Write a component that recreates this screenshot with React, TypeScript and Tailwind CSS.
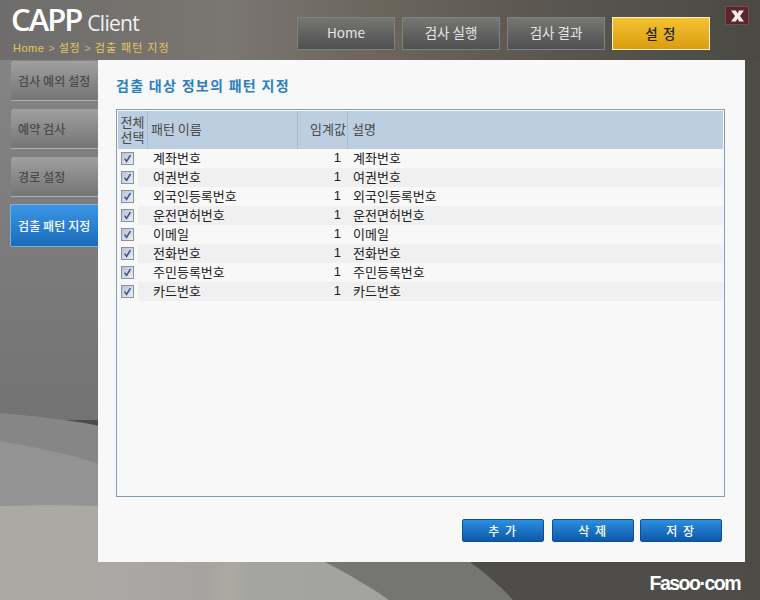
import React from "react";

const rows = ["계좌번호","여권번호","외국인등록번호","운전면허번호","이메일","전화번호","주민등록번호","카드번호"];
const nav = ["Home","검사 실행","검사 결과"];
const side = ["검사 예외 설정","예약 검사","경로 설정"];

function Check() {
  return (
    <svg width="13" height="13" viewBox="0 0 13 13" className="block">
      <defs>
        <linearGradient id="cb" x1="0" y1="0" x2="1" y2="1">
          <stop offset="0" stopColor="#b8bfce" />
          <stop offset="1" stopColor="#eef0f5" />
        </linearGradient>
      </defs>
      <rect x="0.5" y="0.5" width="12" height="12" fill="url(#cb)" stroke="#8d9198" />
      <path d="M3.6 6.6 L5.6 9.4 L9.4 3.2" fill="none" stroke="#3a5499" strokeWidth="1.6" />
    </svg>
  );
}

function Sep() {
  return <span className="mx-[4px] font-['Liberation_Sans',sans-serif] text-[#c9b87a]">&gt;</span>;
}

export default function App() {
  return (
    <div className="relative w-[760px] h-[600px] overflow-hidden font-['Noto_Sans_CJK_KR','Liberation_Sans',sans-serif] bg-[#4c4b46]">
      <svg className="absolute inset-0" width="760" height="600" viewBox="0 0 760 600">
        <defs>
          <linearGradient id="top" x1="0" y1="0" x2="1" y2="0">
            <stop offset="0" stopColor="#6e6d6c" />
            <stop offset="0.3" stopColor="#7a7670" />
            <stop offset="0.5" stopColor="#6b655c" />
            <stop offset="0.75" stopColor="#58554e" />
            <stop offset="1" stopColor="#4a4944" />
          </linearGradient>
          <linearGradient id="left" x1="0" y1="0" x2="0" y2="1">
            <stop offset="0" stopColor="#848484" />
            <stop offset="1" stopColor="#737373" />
          </linearGradient>
          <linearGradient id="bot" x1="0" y1="0" x2="1" y2="0">
            <stop offset="0" stopColor="#aaa9a6" />
            <stop offset="0.38" stopColor="#a5a4a1" />
            <stop offset="0.45" stopColor="#aca99f" />
            <stop offset="0.52" stopColor="#a4a4a2" />
            <stop offset="1" stopColor="#a2a2a0" />
          </linearGradient>
        </defs>
        <rect width="760" height="60" fill="url(#top)" />
        <rect y="60" width="100" height="360" fill="url(#left)" />
        <path d="M0 413 C35 416 70 420 100 426 L100 600 L0 600 Z" fill="#868686" />
        <path d="M0 441 C35 447 70 454 100 464 L100 600 L0 600 Z" fill="#939393" />
        <path d="M0 506 C30 505 70 505 100 506 L100 600 L0 600 Z" fill="#aaa9a3" />
        <path d="M470 562 L745 562 L745 600 L513 600 Z" fill="#4e4d4a" />
        <path d="M325 562 L470 562 C488 575 502 588 513 600 L389 600 Z" fill="#757573" />
        <path d="M98 562 L325 562 C350 575 372 588 389 600 L98 600 Z" fill="url(#bot)" />
      </svg>

      <div className="relative flex flex-col h-full">
        <header className="flex h-[60px]">
          <div className="w-[297px] pl-[11px] pt-[1px]">
            <div className="flex items-baseline h-[36px] font-['Open_Sans',sans-serif] text-white">
              <span className="text-[31px] leading-[36px] font-semibold tracking-[-2px]">CAPP</span>
              <span className="ml-[6px] text-[21px] leading-[36px] font-normal tracking-[-0.7px] text-[#f0f0f0]">Client</span>
            </div>
            <div className="mt-[2px] ml-[2px] text-[11px] leading-[16px] text-[#e6c65a] whitespace-nowrap">
              <span className="font-['Liberation_Sans',sans-serif] tracking-[0.5px]">Home</span>
              <Sep />
              <span className="tracking-[0.6px]">설정</span>
              <Sep />
              <span className="tracking-[1.2px]">검출 패턴 지정</span>
            </div>
          </div>
          <nav className="flex pt-[17px]">
            {nav.map((n) => (
              <div
                key={n}
                className="w-[98px] h-[33px] mr-[7px] pb-[2px] flex items-center justify-center text-[13.5px] text-[#e6e6e6] border border-[#818180] bg-gradient-to-b from-[#767675] to-[#505050]"
              >
                {n}
              </div>
            ))}
            <div className="w-[98px] h-[33px] flex items-center justify-center text-[13.5px] font-medium text-[#222] border border-[#fff3c4] bg-gradient-to-b from-[#f2c232] to-[#dc9c0c] tracking-[1.2px]">
              설 정
            </div>
          </nav>
          <div className="ml-[15px] mt-[6px] w-[24px] h-[19px] flex items-center justify-center bg-[#5c2528] border border-[#744a4a]">
            <svg width="15" height="12" viewBox="0 0 15 12">
              <path d="M1 0.5 H6 L7.5 3.5 L9 0.5 H14 L10 6 L14 11.5 H9 L7.5 8.5 L6 11.5 H1 L5 6 Z" fill="#eeeeee" />
            </svg>
          </div>
        </header>

        <div className="flex h-[502px]">
          <aside className="w-[98px] pl-[11px] pt-[1px] shrink-0">
            {side.map((s) => (
              <div
                key={s}
                className="h-[40px] mb-[8px] flex items-center pl-[7px] text-[12px] font-medium tracking-[0.1px] text-[#4a4a4a] whitespace-nowrap bg-gradient-to-b from-[#a0a0a0] to-[#757575] border-b border-b-[#b0b0b0] rounded-tl-[2px]"
              >
                {s}
              </div>
            ))}
            <div className="h-[43px] -mt-[1px] -ml-[1px] flex items-center pl-[7px] text-[12px] font-medium tracking-[0.1px] text-white whitespace-nowrap bg-gradient-to-b from-[#3a96e6] to-[#1a6cba] border border-r-0 border-[#7cb4e0] rounded-l-[2px]">
              검출 패턴 지정
            </div>
          </aside>

          <main className="w-[647px] bg-[#f8f8f8] pl-[18px]">
            <h1 className="h-[49px] pt-[15px] text-[14px] leading-[20px] font-bold text-[#2b80bd] tracking-[1.3px]">
              검출 대상 정보의 패턴 지정
            </h1>
            <div className="w-[609px] h-[388px] border border-[#7f9bb6] p-[1px]">
              <div className="flex h-[38px] bg-[#bdcee1] text-[13px] text-[#4a4a4a] leading-[15px]">
                <div className="w-[30px] pb-[2px] flex items-center justify-center text-center border-r border-[#a7bbd1]">
                  전체<br />선택
                </div>
                <div className="w-[150px] pb-[3px] flex items-center pl-[3px] border-r border-[#a7bbd1]">패턴 이름</div>
                <div className="w-[50px] pb-[3px] flex items-center justify-end pr-[1px] border-r border-[#a7bbd1] whitespace-nowrap">임계값</div>
                <div className="flex-1 pb-[3px] flex items-center pl-[4px]">설명</div>
              </div>
              {rows.map((r, i) => (
                <div key={r} className="flex h-[19px] text-[13px] leading-[17px] text-[#222]">
                  <div className="w-[20px] pl-[3px] pt-[3px] shrink-0">
                    <Check />
                  </div>
                  <div className={`flex flex-1 ${i % 2 ? "bg-[#f0f0f0]" : ""}`}>
                    <div className="w-[159px] pl-[15px]">{r}</div>
                    <div className="w-[50px] pr-[6px] text-right font-['Liberation_Sans',sans-serif] text-[13px]">1</div>
                    <div className="pl-[6px]">{r}</div>
                  </div>
                </div>
              ))}
            </div>
            <div className="flex mt-[22px] w-[606px] justify-end text-[12px] font-medium text-white tracking-[1.5px]">
              {["추 가", "삭 제", "저 장"].map((b, i) => (
                <div
                  key={b}
                  className={`w-[82px] h-[23px] ${i === 1 ? "ml-[8px] mr-[6px]" : ""} flex items-center justify-center rounded-[2px] border border-[#0f4f96] bg-gradient-to-b from-[#2c8fe0] to-[#0e59a8]`}
                >
                  {b}
                </div>
              ))}
            </div>
          </main>
        </div>

        <footer className="flex-1 flex justify-end items-start pr-[20px] pt-[9px]">
          <span className="font-['Liberation_Sans',sans-serif] text-[19.5px] leading-[24px] font-bold text-white tracking-[-1.5px]">
            Fasoo·com
          </span>
        </footer>
      </div>
    </div>
  );
}
